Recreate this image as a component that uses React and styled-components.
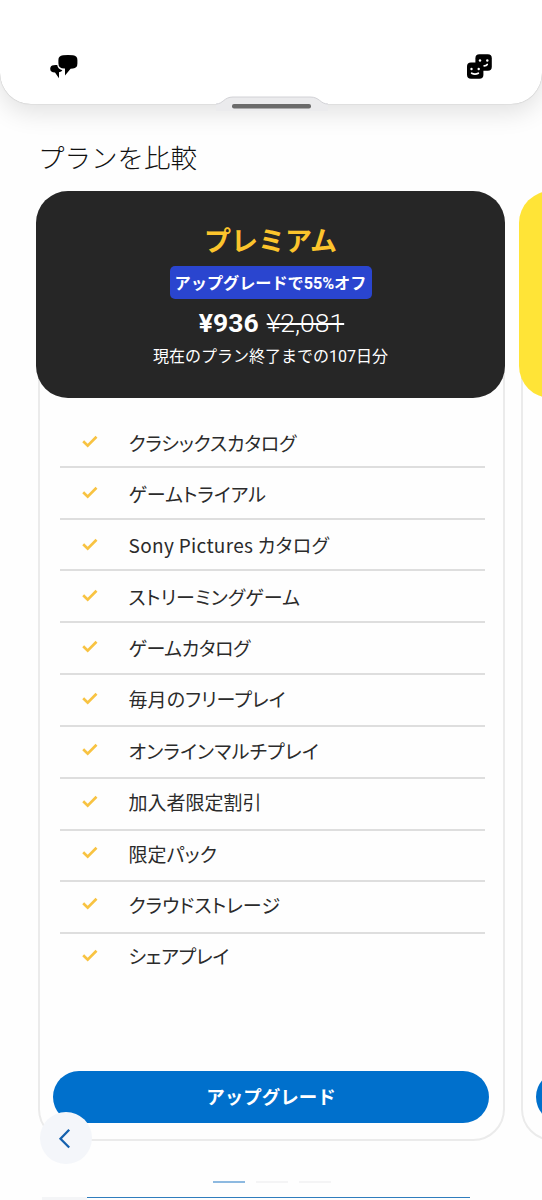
import React from 'react';
import styled, { createGlobalStyle } from 'styled-components';

const Global = createGlobalStyle`
  * { box-sizing: border-box; }
  body { margin: 0; background: #fefefe; }
`;

const Screen = styled.div`
  position: relative;
  width: 542px;
  height: 1200px;
  overflow: hidden;
  background: #fefefe;
  font-family: Roboto, "Noto Sans CJK JP", sans-serif;
  color: #222;
  display: flex;
  flex-direction: column;
`;

const TopBar = styled.header`
  position: relative;
  flex: none;
  height: 104px;
  padding: 53px 49px 0 50px;
  display: flex;
  justify-content: space-between;
  background: #fff;
  border-radius: 0 0 31px 31px;
  box-shadow: 0 0 1px rgba(0, 0, 0, 0.35), 0 8px 26px rgba(0, 0, 0, 0.12);
`;

const Notch = styled.svg`
  position: absolute;
  left: 216px;
  top: 95px;
`;

const Heading = styled.h1`
  margin: 33px 0 0 38px;
  height: 42px;
  line-height: 43px;
  font-size: 26.5px;
  font-weight: 300;
  color: #111;
  white-space: nowrap;
`;

const Carousel = styled.main`
  flex: none;
  height: 950px;
  margin: 12px 0 0 36px;
  display: flex;
  gap: 14px;
`;

const Plan = styled.article`
  flex: none;
  width: 469px;
  height: 950px;
  display: flex;
  flex-direction: column;
`;

const PlanHeader = styled.div`
  position: relative;
  z-index: 1;
  flex: none;
  height: 207px;
  border-radius: 32px;
  background: ${(p) => p.$bg};
  color: #fff;
  display: flex;
  flex-direction: column;
  align-items: center;
  white-space: nowrap;
`;

const PlanName = styled.h2`
  margin: 31px 0 0;
  height: 40px;
  line-height: 40px;
  font-size: 27px;
  font-weight: 700;
  color: #fcc42c;
`;

const Discount = styled.div`
  margin-top: 4px;
  width: 202px;
  height: 33px;
  line-height: 36px;
  border-radius: 5px;
  background: #2a45cf;
  text-align: center;
  font-size: 16.2px;
  font-weight: 700;
  letter-spacing: -0.05px;
`;

const PriceLine = styled.div`
  margin: 4px 0 0 2px;
  height: 40px;
  line-height: 40px;
  display: flex;
  gap: 8px;
  font-size: 26.5px;
`;

const Price = styled.strong`
  font-weight: 700;
`;

const OldPrice = styled.s`
  font-weight: 300;
  text-decoration-thickness: 1.5px;
`;

const Term = styled.div`
  margin-top: 2px;
  height: 24px;
  line-height: 24px;
  font-size: 16px;
`;

const PlanBody = styled.div`
  flex: 1;
  margin: -40px 0 0 2px;
  padding: 56px 14px 16px 13px;
  border: 2px solid #ebebeb;
  border-radius: 0 0 32px 32px;
  display: flex;
  flex-direction: column;
  justify-content: space-between;
`;

const Features = styled.ul`
  list-style: none;
  margin: 0 4px 0 7px;
  padding: 0;
`;

const Feature = styled.li`
  height: 51.83px;
  padding: 0 0 ${(p) => p.$lift}px 22px;
  display: flex;
  align-items: center;
  gap: 30.5px;
  border-bottom: 2px solid ${(p) => (p.$last ? 'transparent' : '#dedede')};
  font-family: "Noto Sans CJK JP", sans-serif;
  font-size: 19px;
  color: #2b2b2b;
  white-space: nowrap;
  font-feature-settings: "palt";
`;

const FeatureLabel = styled.span`
  padding-top: 3.2px;
  line-height: 28px;
  letter-spacing: ${(p) => p.$tracking}px;
`;

const UpgradeButton = styled.button`
  flex: none;
  height: 52px;
  border: 0;
  padding: 0 0 2px;
  border-radius: 26px;
  background: #0070cc;
  color: #fff;
  font: 700 18.5px "Noto Sans CJK JP", sans-serif;
`;

const PreviousButton = styled.button`
  position: absolute;
  z-index: 2;
  left: 40px;
  top: 1112px;
  width: 52px;
  height: 52px;
  border: 0;
  padding: 0;
  border-radius: 50%;
  background: #f4f6fa;
`;

const Pager = styled.nav`
  flex: none;
  margin: 40px 0 0 213px;
  display: flex;
  gap: 11px;
`;

const Page = styled.span`
  width: 32px;
  height: 2px;
  background: ${(p) => (p.$active ? '#8db9e0' : '#f4f4f5')};
`;

const NextSection = styled.div`
  flex: none;
  margin: 14px 0 0 42px;
  height: 3px;
  display: flex;
`;

const Strip = styled.span`
  width: ${(p) => p.$w}px;
  height: ${(p) => p.$h}px;
  background: ${(p) => p.$bg};
`;

const ChatIcon = () => (
  <svg width="29" height="28" viewBox="0 0 29 28">
    <path d="M13 2.2 Q18 1.7 23 2.2 Q27.4 2.6 27.4 7 V10.4 Q27.4 15 23 15.4 L20.6 15.8 L15 22.6 V15.6 Q8.4 15.9 8.4 10.2 V7 Q8.4 2.6 13 2.2Z" />
    <path d="M3.6 12.2 Q5.4 11.7 7.2 12.1 Q8 16.4 12.4 17.3 Q11.6 18.9 9 19.3 V25.3 L5 19.6 Q0.2 19.6 0.2 15.8 Q0.2 12.6 3.6 12.2Z" />
  </svg>
);

const FacesIcon = () => (
  <svg width="27" height="28" viewBox="0 0 27 28">
    <rect x="9.4" y="1.3" width="16.4" height="16.4" rx="4" />
    <rect x="1" y="9.4" width="16.4" height="16.4" rx="4" />
    <g fill="#fff">
      <circle cx="14" cy="7.5" r="1.2" />
      <circle cx="21.3" cy="7.5" r="1.2" />
      <circle cx="5.5" cy="16" r="1.2" />
      <circle cx="12.7" cy="16" r="1.2" />
    </g>
    <path d="M18.2 12.9 Q20.4 12.7 21.2 11.5 M5.7 20.2 Q9 22 12.3 20.2" fill="none" stroke="#fff" strokeWidth="1.8" strokeLinecap="round" />
  </svg>
);

const Check = () => (
  <svg width="16" height="16" viewBox="0 -2 16 16">
    <path d="M1.2 6.3 L5.7 10.7 L14.5 1.8" fill="none" stroke="#f8c342" strokeWidth="2.7" />
  </svg>
);

const features = [
  ['クラシックスカタログ', -0.15],
  ['ゲームトライアル', 0],
  ['Sony Pictures カタログ', 0.32],
  ['ストリーミングゲーム', 0.15],
  ['ゲームカタログ', -0.4],
  ['毎月のフリープレイ', 0.1],
  ['オンラインマルチプレイ', 0.27],
  ['加入者限定割引', 0],
  ['限定パック', 0.1],
  ['クラウドストレージ', 0.05],
  ['シェアプレイ', -0.25],
];

export default function App() {
  return (
    <Screen>
      <Global />
      <TopBar>
        <ChatIcon />
        <FacesIcon />
        <Notch width="112" height="16" viewBox="0 0 112 16">
          <path d="M0 9 C7 9 8 2 17 2 H94 C104 2 104 9 112 9 V16 H0Z" fill="#ebebed" />
          <path d="M0 9 C7 9 8 2 17 2 H94 C104 2 104 9 112 9" fill="none" stroke="#d2d2d6" />
          <rect x="16" y="9" width="79" height="4.5" rx="2" fill="#6b6b6b" />
        </Notch>
      </TopBar>
      <Heading>プランを比較</Heading>
      <Carousel>
        <Plan>
          <PlanHeader $bg="#262626">
            <PlanName>プレミアム</PlanName>
            <Discount>アップグレードで55%オフ</Discount>
            <PriceLine>
              <Price>¥936</Price>
              <OldPrice>¥2,081</OldPrice>
            </PriceLine>
            <Term>現在のプラン終了までの107日分</Term>
          </PlanHeader>
          <PlanBody>
            <Features>
              {features.map(([label, tracking], i) => (
                <Feature key={label} $lift={i * 0.9} $last={i === features.length - 1}>
                  <Check />
                  <FeatureLabel $tracking={tracking}>{label}</FeatureLabel>
                </Feature>
              ))}
            </Features>
            <UpgradeButton>アップグレード</UpgradeButton>
          </PlanBody>
        </Plan>
        <Plan>
          <PlanHeader $bg="#ffe437" />
          <PlanBody>
            <Features />
            <UpgradeButton />
          </PlanBody>
        </Plan>
      </Carousel>
      <PreviousButton aria-label="前へ">
        <svg width="52" height="52" viewBox="0 0 52 52">
          <path d="M29.2 17.8 L20.5 26.8 L29.2 35.5" fill="none" stroke="#1461ae" strokeWidth="2.3" />
        </svg>
      </PreviousButton>
      <Pager>
        <Page $active />
        <Page />
        <Page />
      </Pager>
      <NextSection>
        <Strip $w={45} $h={3} $bg="#f4f5f7" />
        <Strip $w={383} $h={1} $bg="#2f7dbd" />
      </NextSection>
    </Screen>
  );
}
